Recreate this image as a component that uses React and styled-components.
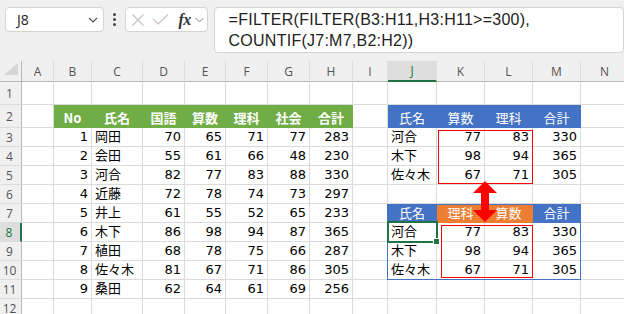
import React from 'react';
import styled, { createGlobalStyle, css } from 'styled-components';

const GlobalStyle = createGlobalStyle`
  html, body {
    margin: 0;
    padding: 0;
    background: #ffffff;
    overflow: hidden;
  }
`;

// column widths: row header, A..N
const colWidths = [22, 32, 38, 51, 42, 41, 42, 42, 43, 35, 49, 48, 48, 48, 48];
const letters = ['A', 'B', 'C', 'D', 'E', 'F', 'G', 'H', 'I', 'J', 'K', 'L', 'M', 'N'];
const rowHeights = [21, 23, 23, 19, 19, 19, 19, 19, 19, 19, 19, 19, 19];

const GREEN = '#70ad47';
const BLUE = '#4472c4';
const ORANGE = '#ed7d31';
const SEL = '#217346';

const scores = [
  [1, '岡田', 70, 65, 71, 77, 283],
  [2, '会田', 55, 61, 66, 48, 230],
  [3, '河合', 82, 77, 83, 88, 330],
  [4, '近藤', 72, 78, 74, 73, 297],
  [5, '井上', 61, 55, 52, 65, 233],
  [6, '木下', 86, 98, 94, 87, 365],
  [7, '植田', 68, 78, 75, 66, 287],
  [8, '佐々木', 81, 67, 71, 86, 305],
  [9, '桑田', 62, 64, 61, 69, 256],
];

const picked = [
  ['河合', 77, 83, 330],
  ['木下', 98, 94, 365],
  ['佐々木', 67, 71, 305],
];

// build a map of cell address -> content
const cells = {};
const leftHead = ['No', '氏名', '国語', '算数', '理科', '社会', '合計'];
leftHead.forEach((t, i) => {
  cells[letters[1 + i] + '2'] = { text: t, fill: GREEN, bold: true, align: 'center' };
});
scores.forEach((r, i) => {
  r.forEach((v, j) => {
    cells[letters[1 + j] + (3 + i)] = { text: v, align: j === 1 ? 'left' : 'right' };
  });
});
['氏名', '算数', '理科', '合計'].forEach((t, i) => {
  cells[letters[9 + i] + '2'] = { text: t, fill: BLUE, align: 'center' };
});
[['氏名', BLUE], ['理科', ORANGE], ['算数', ORANGE], ['合計', BLUE]].forEach(([t, f], i) => {
  cells[letters[9 + i] + '7'] = { text: t, fill: f, align: 'center' };
});
picked.forEach((r, i) => {
  r.forEach((v, j) => {
    const align = j === 0 ? 'left' : 'right';
    cells[letters[9 + j] + (3 + i)] = { text: v, align };
    cells[letters[9 + j] + (8 + i)] = { text: v, align };
  });
});

const Page = styled.div`
  width: 624px;
  height: 314px;
  overflow: hidden;
  background: #f0f0f0;
`;

const Toolbar = styled.div`
  height: 61px;
  box-sizing: border-box;
  padding: 7px 0 0 5px;
  display: flex;
  align-items: flex-start;
  background: #f0f0f0;
`;

const Box = styled.div`
  box-sizing: border-box;
  background: #ffffff;
  border: 1px solid #d4d4d4;
  border-radius: 4px;
`;

const NameBox = styled(Box)`
  width: 101px;
  height: 25px;
  display: flex;
  align-items: center;
  justify-content: space-between;
  padding: 0 5px 0 11px;
  font-family: "Open Sans", "Liberation Sans", sans-serif;
  font-size: 14px;
  color: #222;
`;

const Dots = styled.div`
  width: 22px;
  height: 25px;
  display: flex;
  flex-direction: column;
  align-items: center;
  justify-content: center;
  gap: 2px;

  span {
    width: 3px;
    height: 3px;
    border-radius: 50%;
    background: #444;
  }
`;

const FuncBox = styled(Box)`
  width: 84px;
  height: 25px;
  display: flex;
  align-items: center;
  padding-left: 5px;
  gap: 7px;
`;

const Fx = styled.span`
  font-family: "Liberation Serif", serif;
  font-style: italic;
  font-weight: bold;
  font-size: 16px;
  color: #333;
  margin-left: 2px;
  margin-right: -3px;
  letter-spacing: -0.5px;
`;

const FormulaBox = styled(Box)`
  margin-left: 6px;
  width: 420px;
  height: 46px;
  padding: 1px 12px 0 14px;
  font-family: "Liberation Sans", Arial, sans-serif;
  font-size: 16px;
  line-height: 21px;
  letter-spacing: 0.25px;
  color: #222;
  white-space: pre;
`;

const Sheet = styled.div`
  position: relative;
  display: grid;
  grid-template-columns: ${colWidths.map((w) => w + 'px').join(' ')};
  grid-template-rows: ${rowHeights.map((h) => h + 'px').join(' ')};
  background: #ffffff;
`;

const placed = css`
  grid-row: ${(p) => p.$r};
  grid-column: ${(p) => p.$c};
`;

const Corner = styled.div`
  grid-row: 1;
  grid-column: 1;
  background: #f0f0f0;
  border-right: 1px solid #b9b9b9;
  border-bottom: 1px solid #b9b9b9;
  position: relative;

  &::after {
    content: '';
    position: absolute;
    right: 3px;
    bottom: 6px;
    border-left: 14px solid transparent;
    border-bottom: 12px solid #d6d6d6;
  }
`;

const ColHead = styled.div`
  ${placed};
  box-sizing: border-box;
  background: ${(p) => (p.$active ? '#dedede' : '#f0f0f0')};
  border-right: 1px solid #dcdcdc;
  border-bottom: ${(p) => (p.$active ? `2px solid ${SEL}` : '1px solid #b9b9b9')};
  display: flex;
  align-items: center;
  justify-content: center;
  font-family: "Open Sans", "Liberation Sans", sans-serif;
  font-size: 12px;
  color: ${(p) => (p.$active ? SEL : '#555')};
`;

const RowHead = styled.div`
  ${placed};
  box-sizing: border-box;
  background: ${(p) => (p.$active ? '#dedede' : '#f0f0f0')};
  border-right: ${(p) => (p.$active ? `2px solid ${SEL}` : '1px solid #b9b9b9')};
  border-bottom: 1px solid #dcdcdc;
  display: flex;
  align-items: center;
  justify-content: center;
  padding-right: 2px;
  font-family: "Open Sans", "Liberation Sans", sans-serif;
  font-size: 12px;
  color: ${(p) => (p.$active ? SEL : '#555')};
`;

const Cell = styled.div`
  ${placed};
  box-sizing: border-box;
  min-width: 0;
  white-space: nowrap;
  display: flex;
  align-items: flex-end;
  padding: 0 3px 1px 3px;
  justify-content: ${(p) =>
    p.$align === 'right' ? 'flex-end' : p.$align === 'center' ? 'center' : 'flex-start'};
  border-right: 1px solid ${(p) => p.$fill || '#dadada'};
  border-bottom: 1px solid ${(p) => p.$fill || '#dadada'};
  background: ${(p) => p.$fill || '#ffffff'};
  font-family: "DejaVu Sans", "Noto Sans CJK JP", sans-serif;
  font-size: 13px;
  line-height: 17px;
  font-weight: ${(p) => (p.$bold ? 'bold' : 'normal')};
  color: ${(p) => (p.$fill ? '#ffffff' : '#000000')};
  ${(p) =>
    p.$fill &&
    css`
      font-family: "Noto Sans CJK JP", "DejaVu Sans", sans-serif;
    `}
`;

const Frame = styled.div`
  ${placed};
  margin: ${(p) => p.$inset || '0'};
  border: ${(p) => p.$border};
  pointer-events: none;
  z-index: 2;
`;

const Selection = styled.div`
  grid-column: 11 / 12;
  grid-row: 9 / 10;
  margin: -2px -1px -1px -1px;
  border: 2px solid ${SEL};
  position: relative;
  z-index: 3;

  &::after {
    content: '';
    position: absolute;
    right: -4px;
    bottom: -4px;
    width: 5px;
    height: 5px;
    background: ${SEL};
    border: 1px solid #ffffff;
  }
`;

const Arrow = styled.svg`
  position: absolute;
  left: 473px;
  top: 120px;
  z-index: 4;
`;

function Chevron() {
  return (
    <svg width="10" height="6" viewBox="0 0 10 6">
      <path d="M1 1 L5 5 L9 1" fill="none" stroke="#555" strokeWidth="1.2" />
    </svg>
  );
}

function App() {
  return (
    <Page>
      <GlobalStyle />
      <Toolbar>
        <NameBox>
          <span>J8</span>
          <Chevron />
        </NameBox>
        <Dots>
          <span />
          <span />
          <span />
        </Dots>
        <FuncBox>
          <svg width="14" height="12" viewBox="0 0 14 12">
            <path d="M1.5 0.5 L12.5 11.5 M12.5 0.5 L1.5 11.5" stroke="#c4c4c4" strokeWidth="1.2" />
          </svg>
          <svg width="17" height="11" viewBox="0 0 17 11">
            <path d="M1 5 L6 10 L16 0.5" fill="none" stroke="#d2bcc4" strokeWidth="1.2" />
          </svg>
          <Fx>fx</Fx>
          <svg width="9" height="6" viewBox="0 0 9 6">
            <path d="M0.5 1 L4.5 5 L8.5 1" fill="none" stroke="#888" strokeWidth="1" />
          </svg>
        </FuncBox>
        <FormulaBox>
          {'=FILTER(FILTER(B3:H11,H3:H11>=300),\nCOUNTIF(J7:M7,B2:H2))'}
        </FormulaBox>
      </Toolbar>

      <Sheet>
        <Corner />
        {letters.map((l, ci) => (
          <ColHead key={l} $r={1} $c={ci + 2} $active={l === 'J'}>
            {l}
          </ColHead>
        ))}
        {rowHeights.slice(1).map((_, i) => {
          const r = i + 1;
          return (
            <React.Fragment key={r}>
              <RowHead $r={r + 1} $c={1} $active={r === 8}>
                {r}
              </RowHead>
              {letters.map((l, ci) => {
                const c = cells[l + r] || {};
                return (
                  <Cell
                    key={l + r}
                    $r={r + 1}
                    $c={ci + 2}
                    $align={c.align}
                    $fill={c.fill}
                    $bold={c.bold}
                  >
                    {c.text}
                  </Cell>
                );
              })}
            </React.Fragment>
          );
        })}

        <Frame $c="11 / 15" $r="8 / 12" $inset="0 0 0 -1px" $border={`1px solid ${BLUE}`} />
        <Frame $c="12 / 14" $r="4 / 7" $inset="2px 0 1px 1px" $border="1.5px solid #ff0000" />
        <Frame $c="12 / 14" $r="9 / 12" $inset="2px 0 2px 4px" $border="1.5px solid #ff0000" />
        <Selection />

        <Arrow width="24" height="42" viewBox="0 0 24 42">
          <path d="M12 0 L24 12 L16 12 L16 29 L24 29 L12 41 L0 29 L8 29 L8 12 L0 12 Z" fill="#ff0000" />
        </Arrow>
      </Sheet>
    </Page>
  );
}

export default App;
